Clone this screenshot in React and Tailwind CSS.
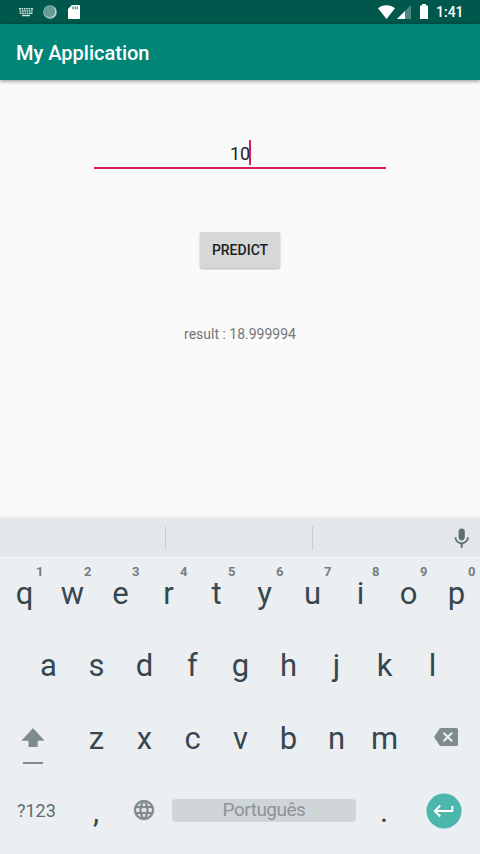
import React from "react";

const TOP_ROW = [
  ["q", "1"], ["w", "2"], ["e", "3"], ["r", "4"], ["t", "5"],
  ["y", "6"], ["u", "7"], ["i", "8"], ["o", "9"], ["p", "0"],
];
const HOME_ROW = ["a", "s", "d", "f", "g", "h", "j", "k", "l"];
const LAST_ROW = ["z", "x", "c", "v", "b", "n", "m"];

function StatusBar() {
  return (
    <div className="flex h-6 items-center bg-[#00574b] text-white">
      <svg className="ml-[19px] h-[10px] w-[14px]" viewBox="0 0 14 10" fill="#d5e4e1">
        <path d="M0 1h2v1.500H0zM2.600 1h1.600v1.500H2.600zM4.900 1h1.600v1.500H4.900zM7.200 1h1.600v1.500H7.200zM9.500 1h1.600v1.500H9.500zM11.800 1H14v1.500h-2.200zM.6 3.300h1.600v1.500H.6zM3 3.300h1.600v1.500H3zM5.300 3.300h1.600v1.500H5.300zM7.600 3.300h1.600v1.500H7.600zM9.900 3.300h1.600v1.500H9.900zM12.200 3.300h1.400v1.500h-1.400zM.6 5.500h2V7h-2zM3.300 5.500h1.600V7H3.300zM5.600 5.500h1.600V7H5.600zM7.900 5.500h1.600V7H7.900zM10.200 5.500h3.200V7h-3.200zM3 7.700h8v1.500H3z" />
      </svg>
      <svg className="ml-[10px] h-[14px] w-[14px]" viewBox="0 0 14 14">
        <circle cx="7" cy="7" r="6.800" fill="#9dbfba" />
        <path d="M10.800 1.800A6.600 6.600 0 0 1 6 13.400a7 7 0 0 0 4.800-11.600z" fill="#dce9e7" />
        <circle cx="6.500" cy="6.400" r="5.600" fill="#659b92" />
      </svg>
      <svg className="ml-[11px] h-[14px] w-3" viewBox="0 0 12 14">
        <path d="M4 0h7a1 1 0 0 1 1 1v12a1 1 0 0 1-1 1H1a1 1 0 0 1-1-1V4z" fill="#fff" />
        <path d="M4.300 1.600h1.300v2.600H4.300zM6.500 1.600h1.300v2.600H6.500zM8.700 1.600H10v2.600H8.700z" fill="#4c8980" />
      </svg>
      <svg className="ml-auto h-[14px] w-[17px]" viewBox="0 0 17 14" fill="#fff">
        <path d="M8.500 14L0 3.300C2.300 1.300 5.200.2 8.500.2S14.700 1.300 17 3.300z" />
      </svg>
      <svg className="ml-[2px] h-[14px] w-[14px]" viewBox="0 0 14 14">
        <path d="M0 14L14 0v14z" fill="#4c8980" />
        <path d="M0 14L8 6v8z" fill="#fff" />
      </svg>
      <svg className="ml-[9px] mb-[2px] h-[15px] w-2" viewBox="0 0 8 15" fill="#fff">
        <path d="M2 0h4v1.500h2V15H0V1.500h2z" />
      </svg>
      <span className="ml-2 mr-4 w-7 whitespace-nowrap text-[14px] leading-6 font-medium">1:41</span>
    </div>
  );
}

function Key({ label, hint }) {
  return (
    <div className="relative flex h-[73px] w-12 shrink-0 items-center justify-center pl-px text-[31px] text-[#37474f]">
      {label}
      {hint && (
        <span className="absolute top-[6px] left-9 text-[13px] leading-4 font-bold text-[#737f84]">{hint}</span>
      )}
    </div>
  );
}

function Keyboard() {
  return (
    <div className="h-[336px] bg-[#ebeff2]">
      <div className="flex h-[39px] items-center bg-[#e3e7ea] shadow-[0_-2px_1px_#f0f0f0]">
        <div className="h-6 w-[166px] border-r border-[#c8cdd0]" />
        <div className="h-6 w-[147px] border-r border-[#c8cdd0]" />
        <svg className="ml-auto mr-[6px] h-6 w-6" viewBox="0 0 24 24" fill="#5f6e74">
          <path d="M11.700 14.500c1.800 0 3.100-1.400 3.100-3.200V5.500a3.100 3.100 0 0 0-6.200 0v5.800c0 1.800 1.300 3.200 3.100 3.200z" />
          <path d="M17 11.300c0 3-2.500 5.100-5.300 5.100s-5.300-2.100-5.300-5.100H4.600c0 3.400 2.700 6.200 6.100 6.700v3.700h2V18c3.400-.5 6.100-3.300 6.100-6.700z" />
        </svg>
      </div>
      <div className="flex h-[73px] border-t border-[#f5f7f8]">
        {TOP_ROW.map(([k, n]) => <Key key={k} label={k} hint={n} />)}
      </div>
      <div className="flex justify-center">
        {HOME_ROW.map((k) => <Key key={k} label={k} />)}
      </div>
      <div className="flex">
        <div className="flex w-[72px] flex-col pl-[21px] pt-[25px]">
          <svg className="h-[37px] w-6" viewBox="0 0 24 37" fill="#808b8f">
            <path d="M12 0L23.600 12.800h-6.900V19H7.500v-6.200H.4z" />
            <path d="M2 34h20v2H2z" />
          </svg>
        </div>
        {LAST_ROW.map((k) => <Key key={k} label={k} />)}
        <div className="flex w-[72px] justify-center pl-1 pt-[25px]">
          <svg className="h-[18px] w-6" viewBox="0 0 24 18">
            <path d="M22.500 0H7c-.7 0-1.200.3-1.600.9L0 9l5.400 8.100c.4.500.900.900 1.600.900h15.500a1.500 1.500 0 0 0 1.500-1.500v-15a1.500 1.500 0 0 0-1.500-1.500z" fill="#808b8f" />
            <path d="M9.500 4.700l8.600 8.600M18.100 4.700l-8.600 8.600" stroke="#ebeff2" strokeWidth="2" />
          </svg>
        </div>
      </div>
      <div className="flex h-[70px] items-center">
        <span className="w-[72px] pl-[17px] pb-[2px] text-[18px] text-[#5f6c72]">?123</span>
        <span className="w-12 pt-[2px] text-center text-[31px] text-[#37474f]">,</span>
        <div className="flex w-12 justify-center pb-[2px]">
          <svg className="h-6 w-6" viewBox="0 0 24 24" fill="#808b8f" stroke="#808b8f" strokeWidth="0.3">
            <path d="M11.990 2C6.470 2 2 6.480 2 12s4.470 10 9.990 10C17.520 22 22 17.520 22 12S17.520 2 11.990 2zm6.930 6h-2.950a15.650 15.650 0 0 0-1.380-3.560A8.030 8.030 0 0 1 18.920 8zM12 4.040c.830 1.200 1.480 2.530 1.910 3.960h-3.820c.430-1.430 1.080-2.760 1.910-3.960zM4.260 14C4.100 13.360 4 12.690 4 12s.1-1.360.260-2h3.380c-.080.660-.140 1.320-.140 2s.060 1.340.140 2H4.260zm.820 2h2.950c.320 1.250.780 2.450 1.380 3.560A7.990 7.990 0 0 1 5.080 16zm2.950-8H5.080a7.990 7.990 0 0 1 4.330-3.560A15.650 15.650 0 0 0 8.030 8zM12 19.960c-.830-1.200-1.480-2.530-1.910-3.960h3.820c-.430 1.430-1.080 2.760-1.910 3.960zM14.340 14H9.660c-.090-.660-.160-1.320-.160-2s.070-1.350.160-2h4.680c.090.650.160 1.320.160 2s-.070 1.340-.160 2zm.250 5.560c.600-1.110 1.060-2.310 1.380-3.560h2.950a8.030 8.030 0 0 1-4.330 3.560zM16.360 14c.080-.660.140-1.320.140-2s-.060-1.340-.140-2h3.380c.160.640.260 1.310.260 2s-.100 1.360-.260 2h-3.380z" />
          </svg>
        </div>
        <div className="mx-1 mb-px flex h-[23px] w-[184px] items-center justify-center rounded bg-[#d0d5d8] pb-[2px] text-[19px] leading-[21px] tracking-[-0.5px] text-[#8b9498]">
          Português
        </div>
        <span className="w-12 pt-[2px] text-center text-[31px] text-[#37474f]">.</span>
        <div className="flex w-[72px] justify-center">
          <svg className="h-9 w-9" viewBox="0 0 36 36">
            <circle cx="18" cy="18" r="17.500" fill="#4db6ac" />
            <path d="M26.300 13v5H9.300M14.300 12.500L8.800 18l5.500 5.500" fill="none" stroke="#fff" strokeWidth="2" />
          </svg>
        </div>
      </div>
    </div>
  );
}

export default function App() {
  return (
    <div className="flex h-[854px] w-[480px] flex-col overflow-hidden bg-[#fafafa] font-['Roboto',sans-serif]">
      <StatusBar />
      <header className="flex h-14 items-center bg-[#008577] px-4 text-[20px] font-medium text-white shadow-[0_1px_4px_rgba(0,0,0,0.45)]">
        <h1 className="pt-[2px]">My Application</h1>
      </header>
      <main className="flex h-[438px] flex-col items-center">
        <div className="mt-[60px] flex h-[29px] w-[292px] justify-center border-b-2 border-[#d81b60]">
          <span className="text-[18px] leading-[27px] text-[#212121]">10</span>
          <span className="-ml-px -mr-px h-[25px] w-[2px] bg-[#d81b60]" />
        </div>
        <button className="mt-[63px] h-9 w-20 rounded-[2px] bg-[#d6d7d7] text-[14px] font-medium text-[#212121] shadow-[0_1px_2px_rgba(0,0,0,0.3)]">
          PREDICT
        </button>
        <p className="mt-[56px] text-[14px] leading-5 text-[#757575]">result : 18.999994</p>
      </main>
      <Keyboard />
    </div>
  );
}
